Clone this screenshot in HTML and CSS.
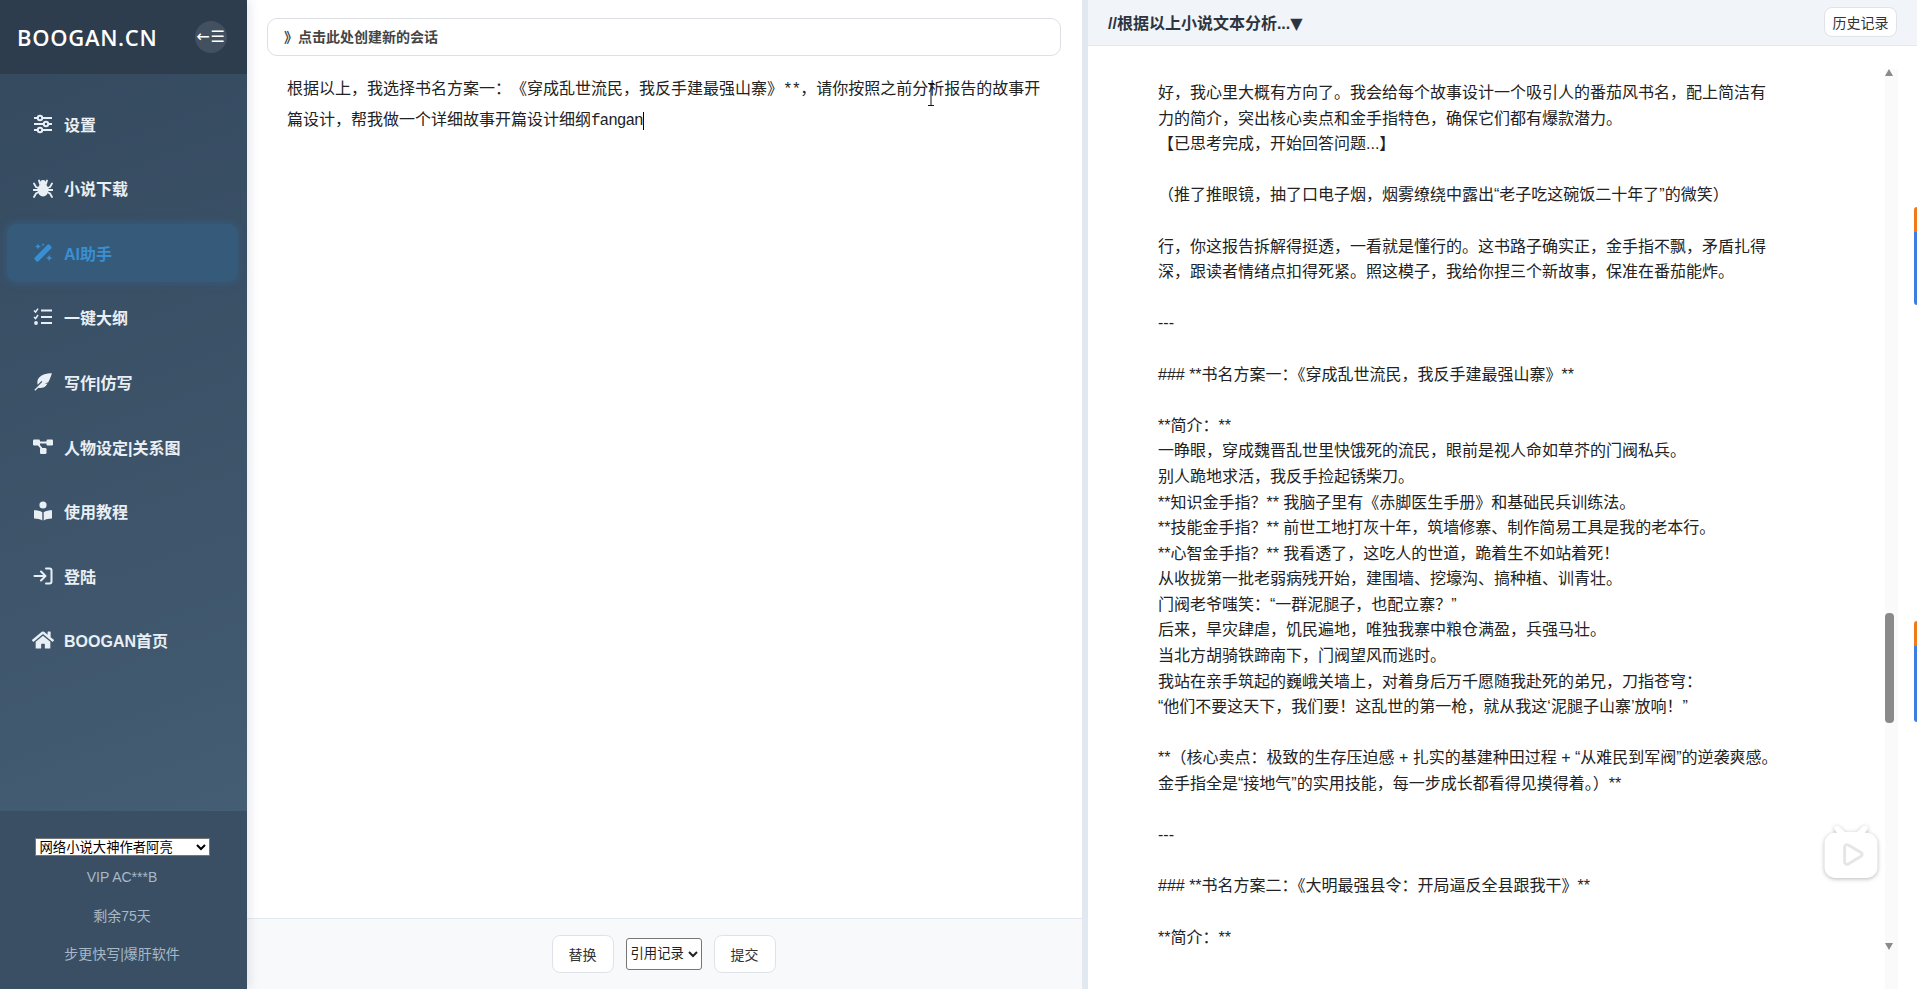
FILE: index.html
```html
<!DOCTYPE html>
<html lang="zh-CN">
<head>
<meta charset="utf-8">
<title>BOOGAN.CN</title>
<link rel="stylesheet" href="styles.css">
</head>
<body>
<div class="app">
  <aside class="sidebar">
    <header class="brand">
      <span class="logo">BOOGAN.CN</span>
      <button class="toggle">←☰</button>
    </header>
    <nav class="nav">
      <a class="nav-item">
        <svg class="icon" viewBox="0 0 20 20"><g fill="none" stroke="currentColor" stroke-width="2"><path d="M1 4h4M9 4h10M1 10h10M15 10h4M1 16h4M9 16h10"/><circle cx="7" cy="4" r="2.2"/><circle cx="13" cy="10" r="2.2"/><circle cx="7" cy="16" r="2.2"/></g></svg>
        <span>设置</span>
      </a>
      <a class="nav-item">
        <svg class="icon" viewBox="0 0 20 20"><g fill="currentColor"><ellipse cx="10" cy="12" rx="5.500" ry="6.500"/><circle cx="10" cy="5" r="3"/></g><g fill="none" stroke="currentColor" stroke-width="1.8" stroke-linecap="round"><path d="M6 2.500 7 6M14 2.500l-1 3.500M1 5.500l2 3.500 4 1.500M19 5.500l-2 3.500-4 1.500M0.500 12H6M19.500 12H14M1 19l2-3.500 3-1.500M19 19l-2-3.500-3-1.500"/></g></svg>
        <span>小说下载</span>
      </a>
      <a class="nav-item active">
        <svg class="icon" viewBox="0 0 20 20"><g fill="currentColor"><path d="M14.500 1.800a1.500 1.500 0 0 1 2.100 0l1.600 1.600a1.500 1.500 0 0 1 0 2.100L5.500 18.200a1.500 1.500 0 0 1-2.100 0l-1.600-1.600a1.500 1.500 0 0 1 0-2.100z"/><path d="M5 .5l.9 2.100 2.100.9-2.100.9L5 6.500l-.9-2.100-2.100-.9 2.100-.9zM16.200 11.800l1 2.200 2.200 1-2.200 1-1 2.200-1-2.200-2.200-1 2.200-1zM10 0l.5 1.300 1.300.5-1.300.5-.5 1.300-.5-1.300-1.300-.5 1.300-.5z"/></g></svg>
        <span>AI助手</span>
      </a>
      <a class="nav-item">
        <svg class="icon" viewBox="0 0 20 20"><g fill="none" stroke="currentColor"><path d="M1 3.500 2.600 5 5 1.600M1 10l1.600 1.500L5 8" stroke-width="1.500"/><path d="M8 3.500h11M8 10h11M8 16h11" stroke-width="2.200"/></g><circle cx="3" cy="16" r="1.900" fill="currentColor"/></svg>
        <span>一键大纲</span>
      </a>
      <a class="nav-item">
        <svg class="icon" viewBox="0 0 20 20"><path fill="currentColor" d="M19 1c-6 .3-10 1.700-12.600 4.300C4 7.700 4.200 10.500 4.600 12.800L8.500 8.900l.9.900-8 8 .9.900 3-3c2.500.4 5.300.3 7.400-1.700.8-.8 1.400-1.700 1.800-2.500l-3 .2 3.800-1.500c1.800-3.200 3-6.500 3.700-9.700z"/></svg>
        <span>写作|仿写</span>
      </a>
      <a class="nav-item">
        <svg class="icon" viewBox="0 0 20 20"><g fill="currentColor"><rect x="0" y="2.500" width="7" height="6" rx="1.200"/><rect x="13.500" y="2.500" width="6.500" height="6" rx="1.200"/><rect x="7" y="11" width="6.500" height="6" rx="1.200"/></g><path fill="none" stroke="currentColor" stroke-width="2" d="M6 5.500h8M5 7l4 5"/></svg>
        <span>人物设定|关系图</span>
      </a>
      <a class="nav-item">
        <svg class="icon" viewBox="0 0 20 20"><g fill="currentColor"><circle cx="10" cy="4" r="3.600"/><path d="M1 9.200c3 0 6 .6 8.300 2v8.300C7 18.200 4 17.700 1.500 17.600a.6.600 0 0 1-.5-.6zM19 9.200c-3 0-6 .6-8.300 2v8.300c2.300-1.300 5.300-1.800 7.800-1.900a.6.600 0 0 0 .5-.6z"/></g></svg>
        <span>使用教程</span>
      </a>
      <a class="nav-item">
        <svg class="icon" viewBox="0 0 20 20"><g fill="none" stroke="currentColor" stroke-width="2" stroke-linecap="round" stroke-linejoin="round"><path d="M1.500 10h10M8 5.500l4.500 4.500L8 14.500"/><path d="M13 2.500h3.500a2 2 0 0 1 2 2v11a2 2 0 0 1-2 2H13"/></g></svg>
        <span>登陆</span>
      </a>
      <a class="nav-item">
        <svg class="icon home" viewBox="0 0 576 512"><path fill="currentColor" d="M280.370 148.260L96 300.110V464a16 16 0 0 0 16 16l112.060-.29a16 16 0 0 0 15.920-16V368a16 16 0 0 1 16-16h64a16 16 0 0 1 16 16v95.640a16 16 0 0 0 16 16.050L464 480a16 16 0 0 0 16-16V300L295.670 148.260a12.190 12.190 0 0 0-15.300 0zM571.600 251.470L488 182.560V44.050a12 12 0 0 0-12-12h-56a12 12 0 0 0-12 12v72.610L318.470 43a48 48 0 0 0-61 0L4.340 251.470a12 12 0 0 0-1.600 16.900l25.500 31A12 12 0 0 0 45.150 301l235.220-193.740a12.190 12.190 0 0 1 15.300 0L530.900 301a12 12 0 0 0 16.900-1.600l25.500-31a12 12 0 0 0-1.700-16.930z"/></svg>
        <span>BOOGAN首页</span>
      </a>
    </nav>
    <footer class="side-foot">
      <select class="author"><option>网络小说大神作者阿亮</option></select>
      <p>VIP AC***B</p>
      <p>剩余75天</p>
      <p>步更快写|爆肝软件</p>
    </footer>
  </aside>

  <main class="editor">
    <div class="session">》点击此处创建新的会话</div>
    <div class="prompt">根据以上，我选择书名方案一：《穿成乱世流民，我反手建最强山寨》<span class="mono">**</span>，请你按照之前分析报告的故事开篇设计，帮我做一个详细故事开篇设计细纲<span class="mono caret">fangan</span></div>
    <div class="actions">
      <button class="btn">替换</button>
      <select class="quote"><option>引用记录</option></select>
      <button class="btn">提交</button>
    </div>
  </main>

  <section class="result">
    <header class="result-head">
      <strong class="result-title">//根据以上小说文本分析...<span class="caret-down">▼</span></strong>
      <button class="history">历史记录</button>
    </header>
    <div class="result-body">
      <div class="result-text">好，我心里大概有方向了。我会给每个故事设计一个吸引人的番茄风书名，配上简洁有力的简介，突出核心卖点和金手指特色，确保它们都有爆款潜力。
【已思考完成，开始回答问题...】

（推了推眼镜，抽了口电子烟，烟雾缭绕中露出“老子吃这碗饭二十年了”的微笑）

行，你这报告拆解得挺透，一看就是懂行的。这书路子确实正，金手指不飘，矛盾扎得深，跟读者情绪点扣得死紧。照这模子，我给你捏三个新故事，保准在番茄能炸。

---

### **书名方案一：《穿成乱世流民，我反手建最强山寨》**

**简介：**
一睁眼，穿成魏晋乱世里快饿死的流民，眼前是视人命如草芥的门阀私兵。
别人跪地求活，我反手捡起锈柴刀。
**知识金手指？** 我脑子里有《赤脚医生手册》和基础民兵训练法。
**技能金手指？** 前世工地打灰十年，筑墙修寨、制作简易工具是我的老本行。
**心智金手指？** 我看透了，这吃人的世道，跪着生不如站着死！
从收拢第一批老弱病残开始，建围墙、挖壕沟、搞种植、训青壮。
门阀老爷嗤笑：“一群泥腿子，也配立寨？”
后来，旱灾肆虐，饥民遍地，唯独我寨中粮仓满盈，兵强马壮。
当北方胡骑铁蹄南下，门阀望风而逃时。
我站在亲手筑起的巍峨关墙上，对着身后万千愿随我赴死的弟兄，刀指苍穹：
“他们不要这天下，我们要！这乱世的第一枪，就从我这‘泥腿子山寨’放响！”

**（核心卖点：极致的生存压迫感 + 扎实的基建种田过程 + “从难民到军阀”的逆袭爽感。金手指全是“接地气”的实用技能，每一步成长都看得见摸得着。）**

---

### **书名方案二：《大明最强县令：开局逼反全县跟我干》**

**简介：**</div>
      <div class="scrollbar">
        <span class="arrow up"></span>
        <span class="thumb"></span>
        <span class="arrow down"></span>
      </div>
    </div>
  </section>
</div>

<span class="edge-tab first"></span>
<span class="edge-tab second"></span>
<svg class="tv" viewBox="0 0 56 54"><path d="M15 9 11 3a2.800 2.800 0 0 1 4.500-3L22 6h12l6.500-6A2.800 2.800 0 0 1 45 3l-4 6z" fill="#fff"/><rect x="1" y="7" width="54" height="46" rx="11" fill="#fff"/><path d="M21.500 21.500a2.500 2.500 0 0 1 3.700-2.200l13 7.800a2.200 2.200 0 0 1 0 3.800l-13 7.800a2.500 2.500 0 0 1-3.700-2.200z" fill="none" stroke="#e6e6e6" stroke-width="3"/></svg>
<svg class="ibeam" viewBox="0 0 8 23"><path d="M1 .5h6M4 .5v22M1 22.500h6" fill="none" stroke="#111" stroke-width="1"/></svg>
</body>
</html>
```
FILE: styles.css
```css
* { box-sizing: border-box; }
html, body { height: 100%; margin: 0; }
body {
  overflow: hidden;
  font-family: "Liberation Sans", "Noto Sans CJK SC", sans-serif;
  color: #222;
  background: #fff;
}
.app { display: flex; height: 989px; }

/* sidebar */
.sidebar {
  width: 247px;
  flex: none;
  display: flex;
  flex-direction: column;
  background: linear-gradient(160deg, #34495e 0%, #3f566c 60%, #486379 100%);
  box-shadow: 2px 0 10px rgba(60, 70, 120, .14);
  position: relative;
  z-index: 2;
}
.brand {
  height: 74px;
  flex: none;
  display: flex;
  align-items: center;
  justify-content: space-between;
  padding: 0 20px 0 17px;
  background: #2d3d4e;
}
.logo {
  font-family: "Open Sans", "Noto Sans", sans-serif;
  font-size: 22px;
  font-weight: 600;
  letter-spacing: .7px;
  color: #fff;
}
.toggle {
  width: 32px;
  height: 32px;
  padding: 0;
  border: 0;
  border-radius: 50%;
  background: rgba(255, 255, 255, .1);
  color: #fff;
  font: 16px/32px "DejaVu Sans", sans-serif;
  letter-spacing: 1px;
  white-space: nowrap;
  display: flex;
  justify-content: center;
}
.nav {
  flex: 1;
  display: flex;
  flex-direction: column;
  gap: 6.6px;
  padding: 20.6px 9px 0 7px;
}
.nav-item {
  height: 58px;
  flex: none;
  display: flex;
  align-items: center;
  gap: 11px;
  padding-left: 26px;
  border-radius: 10px;
  color: #e8eff5;
  font-size: 16px;
  font-weight: 600;
}
.nav-item.active {
  color: #3a8fd0;
  background: #355a7a;
  box-shadow: 0 0 6px 3px rgba(53, 90, 122, .75);
}
.icon { width: 20px; height: 20px; flex: none; }
.icon.home { width: 22px; margin-left: -1px; margin-right: -1px; }

.side-foot {
  height: 178px;
  flex: none;
  padding-top: 27px;
  display: flex;
  flex-direction: column;
  align-items: center;
  background: #3a4f63;
  color: #a6b9c9;
  font-size: 14px;
  text-align: center;
}
.author {
  width: 175px;
  height: 18px;
  padding: 0;
  margin-right: 3px;
  border: 1px solid #767676;
  background: #fff;
  color: #000;
  font-family: "Liberation Sans", "Noto Sans CJK SC", sans-serif;
  font-size: 13.33px;
  line-height: 16px;
}
.side-foot p { margin: 0 3px 0 0; height: 38.6px; line-height: 38.6px; }
.author + p { margin-top: 2px; }

/* editor */
.editor {
  width: 835px;
  flex: none;
  display: flex;
  flex-direction: column;
  background: #fff;
}
.session {
  height: 38px;
  flex: none;
  margin: 18px 21px 0 20px;
  padding-left: 16px;
  border: 1px solid #dcdfe4;
  border-radius: 10px;
  font-size: 14px;
  font-weight: 600;
  line-height: 36px;
  color: #444;
}
.prompt {
  flex: 1;
  padding: 18px 35px 0 40px;
  font-size: 16px;
  line-height: 30px;
  color: #222;
  text-spacing-trim: space-all;
}
.mono {
  font-family: "Liberation Mono", monospace;
  letter-spacing: -1px;
}
.caret { border-right: 1px solid #000; }
.actions {
  height: 71px;
  flex: none;
  display: flex;
  align-items: center;
  justify-content: center;
  gap: 12px;
  padding: 0 2px 1px 0;
  background: #f8f9fa;
  border-top: 1px solid #e2e8f0;
}
.btn {
  width: 62px;
  height: 38px;
  border: 1px solid #dfe3e8;
  border-radius: 8px;
  background: #fff;
  color: #333;
  font-family: "Liberation Sans", "Noto Sans CJK SC", sans-serif;
  font-size: 14px;
}
.quote {
  width: 76px;
  height: 32px;
  padding: 0;
  border: 1px solid #767676;
  border-radius: 3px;
  background: #fff;
  color: #222;
  font-family: "Liberation Sans", "Noto Sans CJK SC", sans-serif;
  font-size: 13.33px;
}

/* result */
.result {
  flex: 1;
  min-width: 0;
  display: flex;
  flex-direction: column;
  border-left: 6px solid #e2e8f0;
}
.result-head {
  height: 46px;
  flex: none;
  display: flex;
  align-items: center;
  justify-content: space-between;
  padding: 0 20px 2px 20px;
  background: #f1f5f9;
  border-bottom: 1px solid #e2e8f0;
}
.result-title { font-size: 16px; font-weight: 700; color: #2c3440; }
.caret-down { font-family: "DejaVu Sans", sans-serif; font-weight: 400; }
.history {
  width: 73px;
  height: 30px;
  padding: 0;
  border: 1px solid #dfe3e8;
  border-radius: 8px;
  background: #fff;
  color: #333;
  font-family: "Liberation Sans", "Noto Sans CJK SC", sans-serif;
  font-size: 14px;
}
.result-body { flex: 1; min-height: 0; display: flex; overflow: hidden; }
.result-text {
  flex: none;
  width: 797px;
  padding: 34px 107px 0 70px;
  font-size: 16px;
  line-height: 25.6px;
  white-space: pre-wrap;
  color: #222;
}
.scrollbar {
  width: 13px;
  flex: none;
  display: flex;
  flex-direction: column;
  align-items: flex-start;
  margin-top: 23px;
  background: #fafafa;
}
.arrow {
  width: 0;
  height: 0;
  border-left: 4.500px solid transparent;
  border-right: 4.500px solid transparent;
}
.arrow.up { border-bottom: 7px solid #8a8a8a; }
.arrow.down { border-top: 7px solid #8a8a8a; margin-top: 220px; }
.thumb {
  width: 9px;
  height: 110px;
  margin-top: 537px;
  border-radius: 4px;
  background: #8a8a8a;
}

/* overlays that float over the page */
.edge-tab {
  position: absolute;
  right: 0;
  width: 3px;
  height: 98px;
  border-radius: 3px 0 0 3px;
  background: linear-gradient(#f07a1a 25px, #3f7de0 25px);
}
.edge-tab.first { top: 207px; }
.edge-tab.second { top: 621px; height: 101px; }
.tv {
  position: absolute;
  left: 1823px;
  top: 826px;
  width: 56px;
  height: 53px;
  filter: drop-shadow(0 1px 2px rgba(0, 0, 0, .28));
}
.ibeam {
  position: absolute;
  left: 927px;
  top: 83px;
  width: 8px;
  height: 23px;
}
```
